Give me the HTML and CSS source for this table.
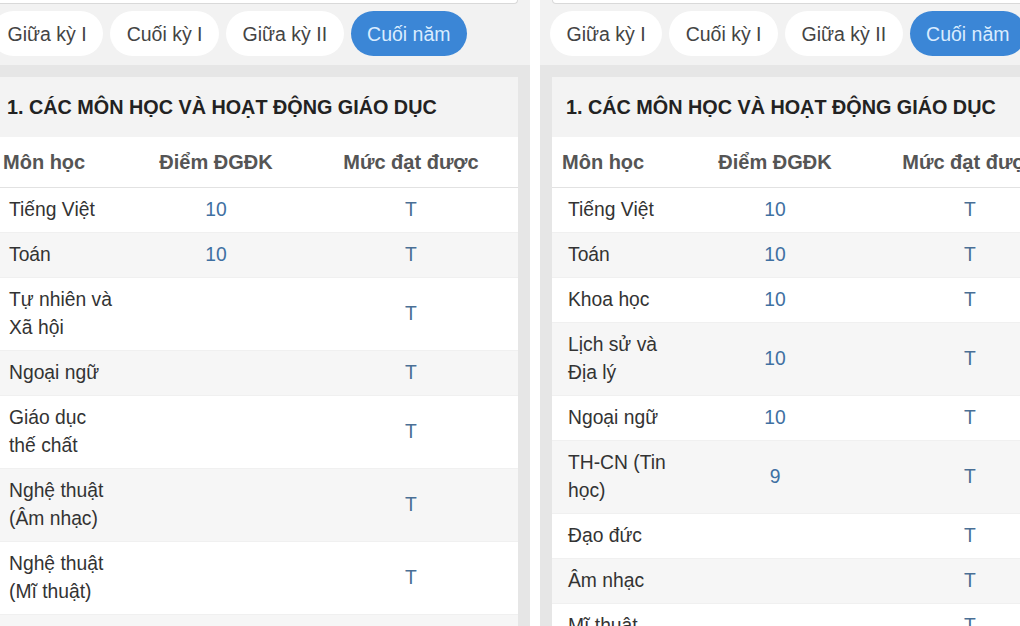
FILE: index.html
```html
<!DOCTYPE html>
<html lang="vi">
<head>
<meta charset="utf-8">
<title>Kết quả học tập</title>
<link rel="stylesheet" href="styles.css">
</head>
<body>
<div class="screen screen-left">
  <div class="phone">
    <div class="top-card"></div>
    <div class="tabs">
      <span class="pill">Giữa kỳ I</span>
      <span class="pill">Cuối kỳ I</span>
      <span class="pill">Giữa kỳ II</span>
      <span class="pill active">Cuối năm</span>
    </div>
    <div class="wrap">
      <div class="card">
        <h2 class="heading">1. CÁC MÔN HỌC VÀ HOẠT ĐỘNG GIÁO DỤC</h2>
        <div class="row head"><span class="c1">Môn học</span><span class="c2">Điểm ĐGĐK</span><span class="c3">Mức đạt được</span></div>
        <div class="row"><span class="c1">Tiếng Việt</span><span class="c2">10</span><span class="c3">T</span></div>
        <div class="row alt"><span class="c1">Toán</span><span class="c2">10</span><span class="c3">T</span></div>
        <div class="row"><span class="c1">Tự nhiên và<br>Xã hội</span><span class="c2"></span><span class="c3">T</span></div>
        <div class="row alt"><span class="c1">Ngoại ngữ</span><span class="c2"></span><span class="c3">T</span></div>
        <div class="row"><span class="c1">Giáo dục<br>thế chất</span><span class="c2"></span><span class="c3">T</span></div>
        <div class="row alt"><span class="c1">Nghệ thuật<br>(Âm nhạc)</span><span class="c2"></span><span class="c3">T</span></div>
        <div class="row"><span class="c1">Nghệ thuật<br>(Mĩ thuật)</span><span class="c2"></span><span class="c3">T</span></div>
        <div class="row alt"><span class="c1">Hoạt động<br>trải nghiệm</span><span class="c2"></span><span class="c3">T</span></div>
      </div>
    </div>
  </div>
</div>
<div class="screen screen-right">
  <div class="phone">
    <div class="top-card"></div>
    <div class="tabs">
      <span class="pill">Giữa kỳ I</span>
      <span class="pill">Cuối kỳ I</span>
      <span class="pill">Giữa kỳ II</span>
      <span class="pill active">Cuối năm</span>
    </div>
    <div class="wrap">
      <div class="card">
        <h2 class="heading">1. CÁC MÔN HỌC VÀ HOẠT ĐỘNG GIÁO DỤC</h2>
        <div class="row head"><span class="c1">Môn học</span><span class="c2">Điểm ĐGĐK</span><span class="c3">Mức đạt được</span></div>
        <div class="row"><span class="c1">Tiếng Việt</span><span class="c2">10</span><span class="c3">T</span></div>
        <div class="row alt"><span class="c1">Toán</span><span class="c2">10</span><span class="c3">T</span></div>
        <div class="row"><span class="c1">Khoa học</span><span class="c2">10</span><span class="c3">T</span></div>
        <div class="row alt"><span class="c1">Lịch sử và<br>Địa lý</span><span class="c2">10</span><span class="c3">T</span></div>
        <div class="row"><span class="c1">Ngoại ngữ</span><span class="c2">10</span><span class="c3">T</span></div>
        <div class="row alt"><span class="c1">TH-CN (Tin<br>học)</span><span class="c2">9</span><span class="c3">T</span></div>
        <div class="row"><span class="c1">Đạo đức</span><span class="c2"></span><span class="c3">T</span></div>
        <div class="row alt"><span class="c1">Âm nhạc</span><span class="c2"></span><span class="c3">T</span></div>
        <div class="row"><span class="c1">Mĩ thuật</span><span class="c2"></span><span class="c3">T</span></div>
      </div>
    </div>
  </div>
</div>
</body>
</html>
```
FILE: styles.css
```css
* { box-sizing: border-box; }
html, body { margin: 0; padding: 0; }
body {
  width: 1020px;
  height: 626px;
  overflow: hidden;
  background: #ffffff;
  display: flex;
  gap: 10px;
  font-family: "Liberation Sans", Arial, sans-serif;
  color: #333;
}
.screen {
  height: 626px;
  overflow: hidden;
  background: #f2f2f2;
  flex: none;
}
.screen-left { width: 530px; }
.screen-right { width: 480px; }
.phone { width: 549px; }
.screen-left .phone { margin-left: -19px; }

.top-card {
  height: 4px;
  margin: 0 12px;
  background: #fff;
  border: 1px solid #d9d9d9;
  border-top: none;
  border-radius: 0 0 8px 8px;
}
.tabs {
  display: flex;
  gap: 7px;
  padding: 7px 10px 9px;
}
.pill {
  flex: none;
  background: #fff;
  color: #444;
  font-size: 19.5px;
  line-height: 24px;
  padding: 11px 16.5px 10px;
  border-radius: 23px;
}
.pill.active {
  background: #3b86d6;
  color: #d9ecff;
}
.wrap {
  background: #e6e6e6;
  padding: 12px;
  min-height: 600px;
}
.card {
  background: #fff;
}
.heading {
  margin: 0;
  height: 60px;
  line-height: 60px;
  padding: 0 14px;
  background: #f3f3f3;
  font-size: 19.8px;
  font-weight: bold;
  color: #222;
  white-space: nowrap;
}
.row {
  display: grid;
  grid-template-columns: 148px 150px 1fr;
  align-items: center;
  font-size: 19.3px;
  line-height: 28px;
  padding: 8px 0;
  background: #fff;
  border-bottom: 1px solid #f0f0f0;
}
.row.alt { background: #f6f6f6; }
.row .c1 { padding-left: 16px; }
.row .c2 { text-align: center; color: #3f70a2; }
.row .c3 { text-align: center; padding-left: 13px; color: #4a6f95; }
.row.head {
  padding: 11px 0;
  font-weight: bold;
  font-size: 20px;
  color: #555;
  border-bottom: 1px solid #e2e2e2;
}
.row.head .c1 { padding-left: 10px; }
.row.head .c2, .row.head .c3 { color: #555; }
```
